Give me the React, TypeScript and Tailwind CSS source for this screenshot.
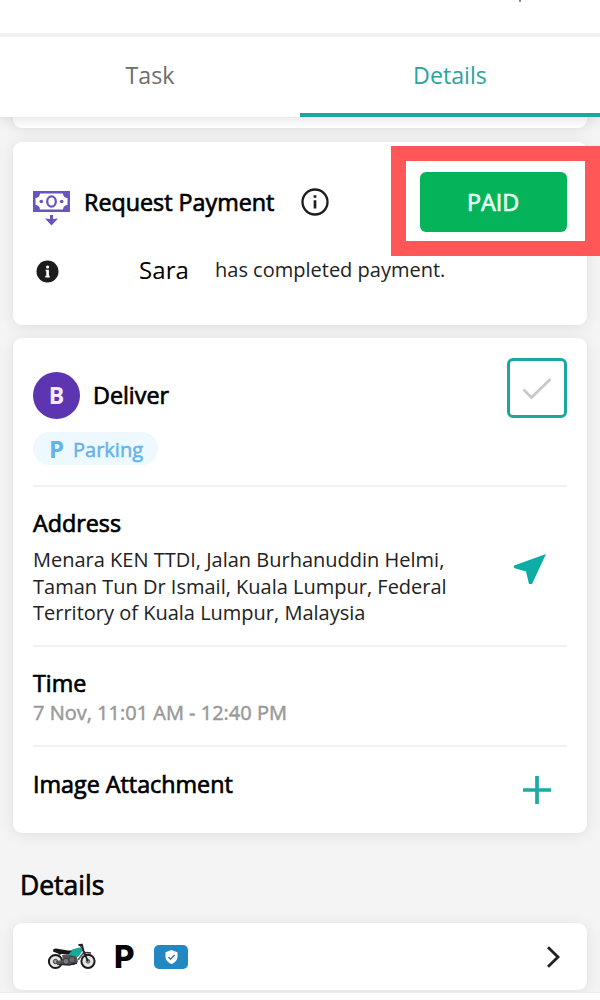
import type { ReactNode } from "react";

const OPEN = "font-['Open_Sans',sans-serif]";
const HEADING =
  "font-['Open_Sans',sans-serif] text-[23.3px] leading-8 text-black whitespace-nowrap [-webkit-text-stroke:0.7px_black]";

function Card({ className, children }: { className: string; children?: ReactNode }) {
  return (
    <section className={`mx-[13px] rounded-[9px] bg-white shadow-[0_2px_14px_rgba(0,0,0,0.09)] ${className}`}>
      {children}
    </section>
  );
}

function BanknoteIcon() {
  return (
    <svg className="h-[36px] w-[37px] shrink-0" viewBox="0 0 37 36" fill="#6a55bd">
      <path fillRule="evenodd" d="M0 0H37V21H0ZM7 2.5A4.5 4.5 0 0 1 2.5 7V14A4.5 4.5 0 0 1 7 18.5H30A4.5 4.5 0 0 1 34.5 14V7A4.5 4.5 0 0 1 30 2.5Z" />
      <ellipse cx="18.5" cy="10.5" rx="4.3" ry="5.1" fill="none" stroke="#6a55bd" strokeWidth="2.3" />
      <circle cx="8.3" cy="10.5" r="1.8" />
      <circle cx="28.7" cy="10.5" r="1.8" />
      <path d="M17 24H20V28L25 27.6L18.5 34.6L12 27.6L17 28Z" />
    </svg>
  );
}

function InfoOutlineIcon() {
  return (
    <svg className="size-7 shrink-0" viewBox="0 0 28 28" fill="none" stroke="#1d1d1f" strokeWidth="2.3">
      <circle cx="14" cy="14" r="12.5" />
      <path d="M14 12.3V20.5M14 7.3V9.8" strokeWidth="2.7" />
    </svg>
  );
}

function InfoSolidIcon() {
  return (
    <svg className="size-[23px] shrink-0" viewBox="0 0 23 23">
      <circle cx="11.5" cy="11.5" r="11" fill="#1c1c1e" />
      <path d="M9.6 9.7H12.9V15.8H13.7V17.4H9.3V15.8H10.3V11.3H9.6Z" fill="#fff" />
      <circle cx="11.6" cy="7" r="1.6" fill="#fff" />
    </svg>
  );
}

function MotorcycleIcon() {
  return (
    <svg className="h-[27px] w-[50px] shrink-0" viewBox="0 0 50 27" fill="none">
      <path d="M7.5 18.5L14 10L22 11M31 17L37 9L41 18M36 8L33 2" stroke="#555" strokeWidth="1.5" />
      <circle cx="8.5" cy="18.5" r="6.6" fill="#e4e4e8" stroke="#19191b" strokeWidth="2" />
      <circle cx="41" cy="18.3" r="6.6" fill="#e4e4e8" stroke="#19191b" strokeWidth="2" />
      <circle cx="8.5" cy="18.5" r="2.2" fill="#999" stroke="#444" />
      <circle cx="41" cy="18.3" r="1.8" fill="#aaa" stroke="#555" />
      <path d="M15 12L29 10L31 19L27 22L17 21L9 20V18L16 17Z" fill="#55555a" />
      <circle cx="19" cy="18.3" r="3" fill="#77777c" stroke="#3c3c40" />
      <circle cx="25" cy="16.5" r="3.1" fill="#68686d" stroke="#3c3c40" />
      <path d="M10 21L22 22L30 20" stroke="#252528" strokeWidth="1.7" />
      <path d="M21 11.5L25 6.5L32 4.5L37 6L34 10L31 14L27 13Z" fill="#16a99a" />
      <path d="M6.5 6L9 5.5L21 7.5H25L22 11H12L6 8.5Z" fill="#171719" />
      <path d="M31.5 2L35 1.8L36.5 8L41 18.3" stroke="#202023" strokeWidth="1.8" />
      <path d="M36 11L39 9.5L44 10" stroke="#333" strokeWidth="1.3" />
    </svg>
  );
}

function Insurance() {
  return (
    <span className="flex h-6 w-[34px] shrink-0 items-center justify-center rounded-[5px] bg-[#2388c2]">
      <svg className="h-[14px] w-[13px]" viewBox="0 0 13 14">
        <path d="M6.5 0L12.5 2.2V6.5C12.5 10 10 12.6 6.5 14C3 12.6 .5 10 .5 6.5V2.2Z" fill="#fff" />
        <path d="M3.5 7.2L5.6 9.1L9.6 5" fill="none" stroke="#28709b" strokeWidth="1.3" />
      </svg>
    </span>
  );
}

function Divider() {
  return <div className="h-[2px] shrink-0 bg-[#f2f2f2]" />;
}

export default function App() {
  return (
    <main className="relative flex h-[1000px] w-[600px] flex-col overflow-hidden bg-[#f4f4f4] font-['Open_Sans',sans-serif]">
      <header className="relative z-10 h-[117px] shrink-0 bg-white shadow-[0_2px_12px_rgba(0,0,0,0.12)]">
        <div className="flex h-[33px] justify-end pr-[79px]">
          <span className="h-[2px] w-[2px] rounded-b-full bg-[#777]" />
        </div>
        <div className="h-1 bg-[#f1f1f1]" />
        <nav className={`grid h-20 grid-cols-2 text-center text-[23.2px] leading-[76px] ${OPEN}`}>
          <span className="text-[#6d6d6d]">Task</span>
          <span className="border-b-4 border-[#1ba7a0] text-[#2ba39c]">Details</span>
        </nav>
      </header>

      <Card className="h-[11px] shrink-0 rounded-t-none" />

      <Card className="mt-[14px] flex h-[183px] shrink-0 flex-col px-5 pt-[30px]">
        <div className="flex h-[60px] items-center">
          <span className="mt-[13px]"><BanknoteIcon /></span>
          <h2 className={`ml-[14px] w-[217px] ${HEADING}`}>Request Payment</h2>
          <InfoOutlineIcon />
          <button className={`ml-auto h-[60px] w-[147px] rounded-[6px] bg-[#05b45a] pr-[1px] text-[23.3px] leading-[60px] text-[#e9fff0] [-webkit-text-stroke:0.7px_#e9fff0] ${OPEN}`}>
            PAID
          </button>
        </div>
        <div className="mt-[24px] flex h-[30px] items-center pl-[3px]">
          <InfoSolidIcon />
          <span className={`-mt-[2px] ml-[80px] w-[76px] text-[24px] leading-[30px] tracking-[0.1px] text-black ${OPEN}`}>Sara</span>
          <span className="-mt-[2px] text-[20px] leading-[30px] whitespace-nowrap text-[#222]">has completed payment.</span>
        </div>
      </Card>

      <Card className="mt-[13px] flex h-[495px] shrink-0 flex-col px-5">
        <div className="flex h-[147px] shrink-0 justify-between pt-5">
          <div className="pt-[14px]">
            <div className="flex h-[47px] items-center">
              <span className={`flex size-[47px] items-center justify-center rounded-full bg-[#5e35b1] text-[23px] font-bold text-[#f5edff] ${OPEN}`}>B</span>
              <h2 className={`-mt-[2px] ml-[13px] ${HEADING}`}>Deliver</h2>
            </div>
            <div className="mt-[13px] flex h-[33px] w-[125px] items-center rounded-full bg-[#edf8ff] pl-[16px] text-[#64b3ed]">
              <span className={`w-[24px] text-[24px] leading-[33px] font-bold ${OPEN}`}>P</span>
              <span className={`mt-[2px] text-[20px] leading-[33px] [-webkit-text-stroke:0.5px_#64b3ed] ${OPEN}`}>Parking</span>
            </div>
          </div>
          <button className="flex size-[60px] items-center justify-center rounded-[6px] border-3 border-[#1ba7a0]">
            <svg className="mt-[2px] h-[24px] w-[30px]" viewBox="0 0 30 24" fill="none" stroke="#c9c9c9" strokeWidth="2.8">
              <path d="M1.5 12.5L9.5 20.5L28.5 2" />
            </svg>
          </button>
        </div>
        <Divider />
        <div className="flex h-[158px] shrink-0 flex-col pt-[20px]">
          <h2 className={HEADING}>Address</h2>
          <div className="mt-[8px] flex justify-between">
            <p className="w-[440px] text-[20px] leading-[26.7px] whitespace-nowrap text-[#222] [font-kerning:none]">
              Menara KEN TTDI, Jalan Burhanuddin Helmi,
              <br />
              Taman Tun Dr Ismail, Kuala Lumpur, Federal
              <br />
              Territory of Kuala Lumpur, Malaysia
            </p>
            <svg className="mt-[7px] mr-[21px] h-[31px] w-[32px]" viewBox="0 0 32 31" fill="#0cada5">
              <path d="M32 0L18 30H15L12 17.5L0 14V11.5Z" />
            </svg>
          </div>
        </div>
        <Divider />
        <div className="flex h-[98px] shrink-0 flex-col pt-[20px]">
          <h2 className={HEADING}>Time</h2>
          <p className={`text-[20px] leading-[27px] text-[#999] [-webkit-text-stroke:0.5px_#999] ${OPEN}`}>7 Nov, 11:01 AM - 12:40 PM</p>
        </div>
        <Divider />
        <div className="flex justify-between pt-[21px]">
          <h2 className={HEADING}>Image Attachment</h2>
          <svg className="mt-[8px] mr-[16px] size-7" viewBox="0 0 28 28" stroke="#1aaba2" strokeWidth="3.7">
            <path d="M14 0V28M0 14H28" />
          </svg>
        </div>
      </Card>

      <h1 className={`mt-[34px] ml-5 h-[36px] shrink-0 text-[26.5px] leading-[36px] text-black [-webkit-text-stroke:0.7px_black] ${OPEN}`}>Details</h1>

      <Card className="mt-[20px] flex h-[67px] shrink-0 items-center pr-[27px] pl-[34px]">
        <MotorcycleIcon />
        <span className="ml-[17px] w-[22px] font-[Inter,sans-serif] text-[31.5px] leading-[32px] font-extrabold text-[#050505]">P</span>
        <span className="ml-[18px]"><Insurance /></span>
        <svg className="ml-auto h-[22px] w-[13px]" viewBox="0 0 13 22" fill="none" stroke="#202024" strokeWidth="2.8">
          <path d="M1 1.2L11 11L1 20.8" />
        </svg>
      </Card>
      <div className="z-10 mt-[2px] h-[8px] shrink-0 border-t border-[#ececec] bg-[#fdfdfd]" />

      <div className="pointer-events-none absolute top-[146px] left-[391px] z-20 h-[110px] w-[209px] border-[15px] border-[#ff5757]" />
    </main>
  );
}
